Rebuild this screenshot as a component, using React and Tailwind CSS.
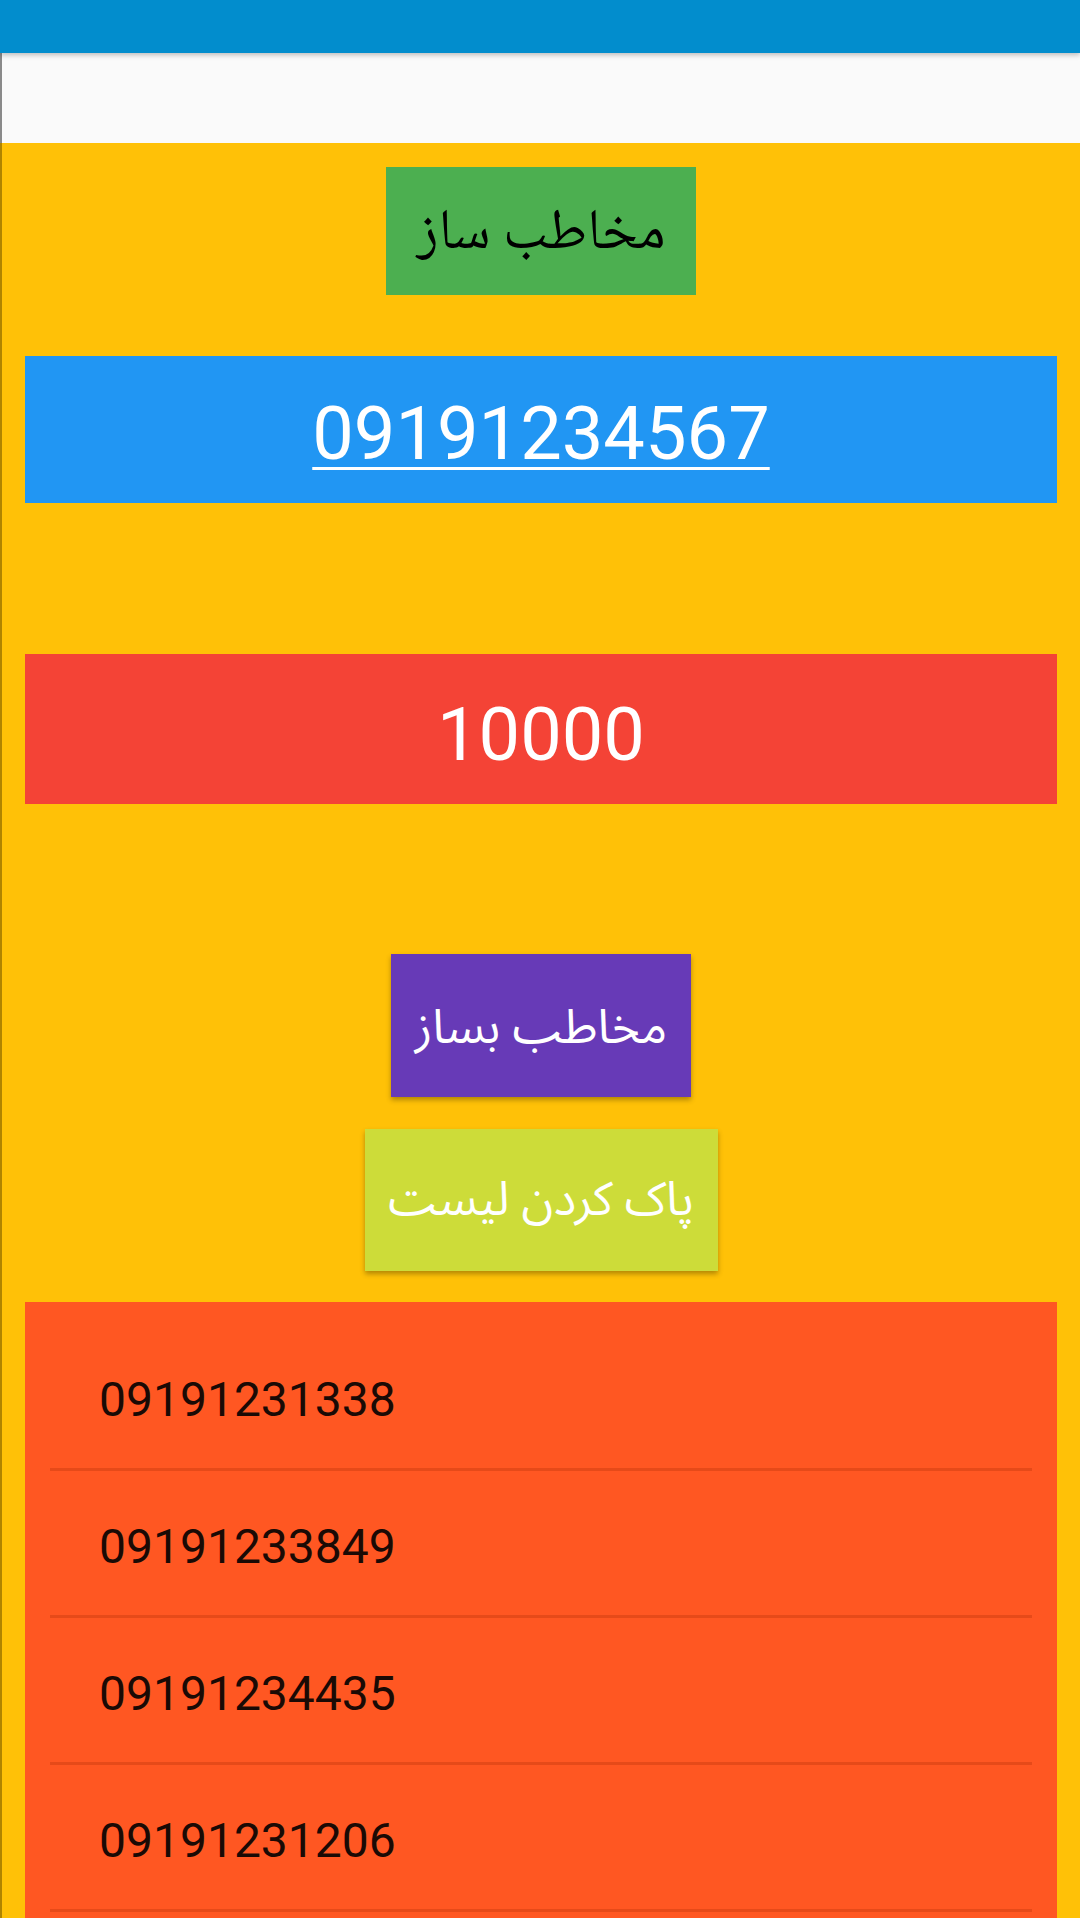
import React from 'react';

const numbers = ['09191231338', '09191233849', '09191234435', '09191231206'];

const arabic = "font-['Noto_Sans_Arabic','DejaVu_Sans',sans-serif]";
const naskh = "font-['Noto_Naskh_Arabic','DejaVu_Serif','DejaVu_Sans',serif]";

export default function App() {
    return (
        <div className="w-[1080px] h-[1918px] overflow-hidden flex flex-col bg-[#ffc107] font-['Roboto',sans-serif]">
            {/* status bar */}
            <div className="relative z-10 h-[53px] shrink-0 bg-[#028dcd] shadow-[0_2px_5px_rgba(0,0,0,0.25)]" />
            {/* app bar */}
            <div className="h-[90px] shrink-0 bg-[#fafafa] border-l-2 border-[#8a8a8a]" />

            <div className="flex-1 flex flex-col items-center border-l-2 border-[#b08400]">
                <div className={`mt-[24px] w-[310px] h-[128px] pt-[10px] bg-[#4caf50] flex items-center justify-center text-black text-[57px] ${naskh}`} dir="rtl">
                    مخاطب ساز
                </div>

                <div className="mt-[61px] w-[1032px] h-[147px] pt-[8px] bg-[#2196f3] flex items-center justify-center">
                    <span className="text-white text-[74px] underline underline-offset-[8px] decoration-[3px]">09191234567</span>
                </div>

                <div className="mt-[151px] w-[1032px] h-[150px] pt-[10px] bg-[#f44336] flex items-center justify-center">
                    <span className="text-white text-[74px]">10000</span>
                </div>

                <button className={`mt-[150px] w-[300px] h-[143px] pt-[4px] bg-[#673ab7] text-white text-[48px] shadow-[0_3px_5px_rgba(0,0,0,0.3)] ${arabic}`} dir="rtl">
                    مخاطب بساز
                </button>

                <button className={`mt-[32px] w-[353px] h-[142px] bg-[#cddc39] text-white text-[47px] shadow-[0_3px_5px_rgba(0,0,0,0.3)] ${arabic}`} dir="rtl">
                    پاک کردن لیست
                </button>

                <div className="mt-[31px] w-[1032px] flex-1 bg-[#ff5722] pt-[22px] px-[25px]">
                    {numbers.map((n) => (
                        <div key={n} className="h-[147px] flex items-center pt-[8px] pl-[49px] border-b-[3px] border-[#e64a19] text-[#1a0a05] text-[48px]">
                            {n}
                        </div>
                    ))}
                </div>
            </div>
        </div>
    );
}
